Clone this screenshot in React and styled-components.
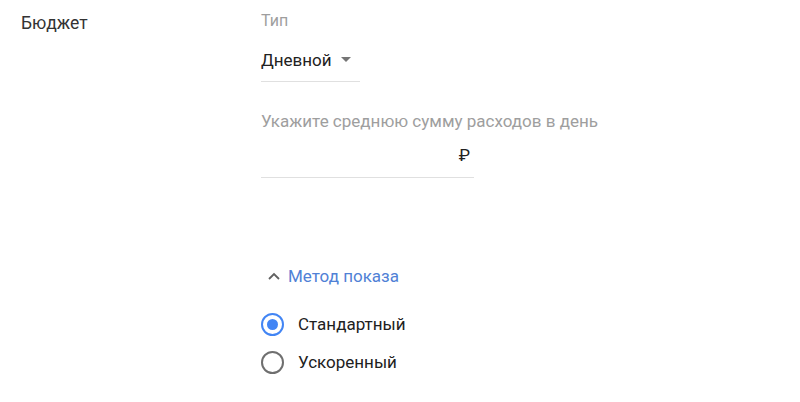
import styled, { createGlobalStyle } from "styled-components";

const GlobalStyle = createGlobalStyle`
  body {
    margin: 0;
    background: #fff;
    font-family: Roboto, "Noto Sans", Arial, sans-serif;
  }
`;

const Page = styled.div`
  display: grid;
  grid-template-columns: 240px 1fr;
  padding: 11px 0 0 21px;
  height: 402px;
  box-sizing: border-box;
`;

const SectionTitle = styled.div`
  font-size: 17.5px;
  color: #333;
  line-height: 24px;
`;

const Fields = styled.div`
  display: flex;
  flex-direction: column;
`;

const Label = styled.div`
  font-size: ${(p) => p.$size || 17}px;
  color: #9e9e9e;
  line-height: 20px;
  margin-top: ${(p) => p.$top || 0}px;
`;

const Select = styled.div`
  display: flex;
  align-items: center;
  width: 99px;
  height: 40px;
  margin-top: 11px;
  border-bottom: 1px solid #e0e0e0;
  font-size: 17px;
  color: #212121;
  padding-bottom: 4px;
  box-sizing: border-box;
`;

const Caret = styled.span`
  margin-left: 9px;
  width: 0;
  height: 0;
  border-left: 5px solid transparent;
  border-right: 5px solid transparent;
  border-top: 5px solid #757575;
`;

const Amount = styled.div`
  display: flex;
  justify-content: flex-end;
  align-items: center;
  width: 213px;
  height: 45px;
  padding-right: 4px;
  box-sizing: border-box;
  border-bottom: 1px solid #e0e0e0;
  font-size: 17px;
  color: #212121;
  margin-top: 2px;
`;

const Toggle = styled.div`
  display: flex;
  align-items: center;
  gap: 8px;
  margin: 86px 0 0 7px;
  font-size: 17px;
  color: #5081d6;
  line-height: 24px;
`;

const Radios = styled.div`
  display: flex;
  flex-direction: column;
  gap: 14px;
  margin-top: 24px;
`;

const RadioRow = styled.label`
  display: flex;
  align-items: center;
  gap: 14px;
  font-size: 17px;
  color: #212121;
  line-height: 24px;
`;

const Circle = styled.span`
  width: 23px;
  height: 23px;
  box-sizing: border-box;
  border-radius: 50%;
  border: 2px solid ${(p) => (p.$on ? "#4285f4" : "#6f6f6f")};
  display: flex;
  align-items: center;
  justify-content: center;
  &::after {
    content: "";
    width: 11px;
    height: 11px;
    border-radius: 50%;
    background: ${(p) => (p.$on ? "#4285f4" : "transparent")};
  }
`;

function Radio({ on, children }) {
  return (
    <RadioRow>
      <Circle $on={on} />
      {children}
    </RadioRow>
  );
}

export default function App() {
  return (
    <>
      <GlobalStyle />
      <Page>
        <SectionTitle>Бюджет</SectionTitle>
        <Fields>
          <Label $size={16}>Тип</Label>
          <Select>
            Дневной
            <Caret />
          </Select>
          <Label $top={29}>Укажите среднюю сумму расходов в день</Label>
          <Amount>₽</Amount>
          <Toggle>
            <svg width="12" height="8" viewBox="0 0 12 8">
              <path d="M1 7 L6 2 L11 7" fill="none" stroke="#616161" strokeWidth="1.8" />
            </svg>
            Метод показа
          </Toggle>
          <Radios>
            <Radio on>Стандартный</Radio>
            <Radio>Ускоренный</Radio>
          </Radios>
        </Fields>
      </Page>
    </>
  );
}
